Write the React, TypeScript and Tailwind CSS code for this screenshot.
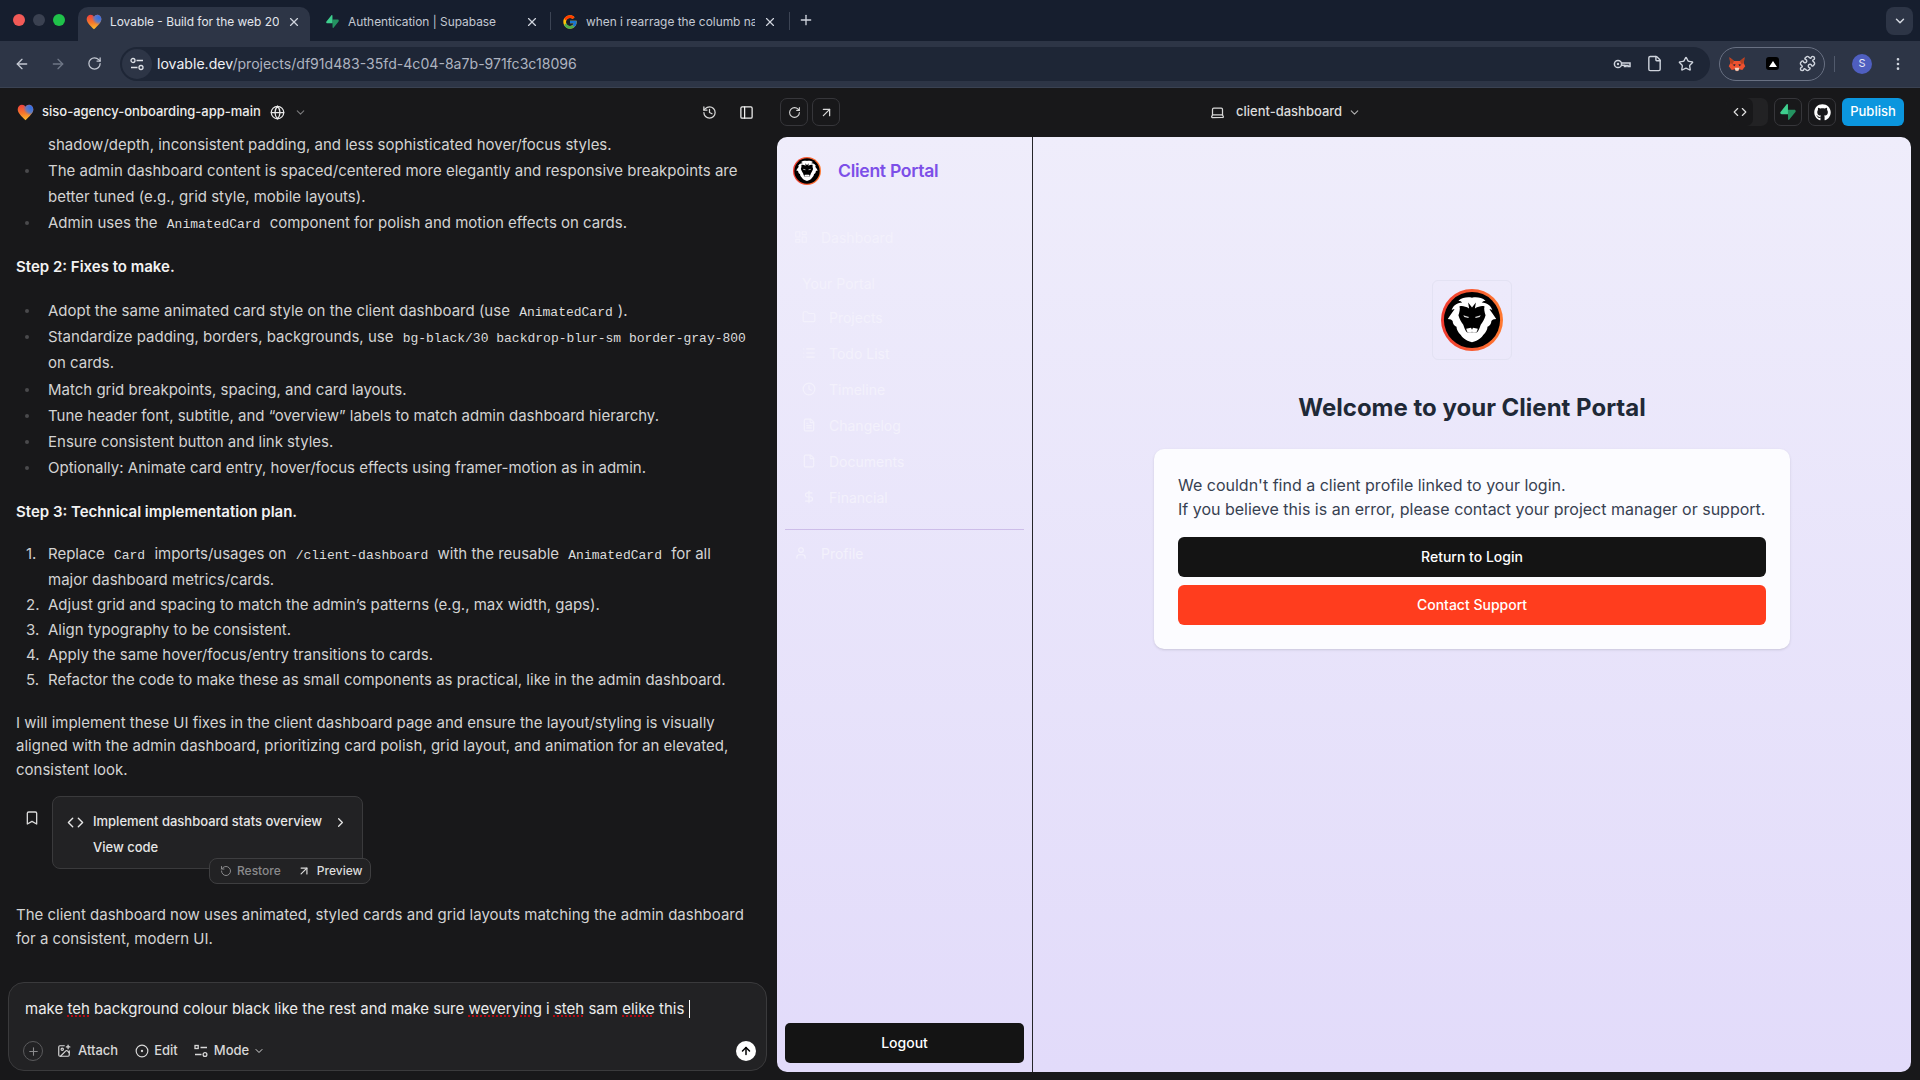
import React from "react";
import {
  ArrowLeft, ArrowRight, RotateCw, X, Plus, ChevronDown, ChevronRight, File, Star, Puzzle, EllipsisVertical,
  History, PanelLeft, Globe, ArrowUpRight, Laptop, Code, Bookmark, RotateCcw, ImagePlus, CircleDot, ArrowUp,
  LayoutDashboard, Folder, List, Clock, FileText, DollarSign, User,
} from "lucide-react";
import { FcGoogle } from "react-icons/fc";
import { FaGithub } from "react-icons/fa";

const Heart = ({ id, size }: { id: string; size: number }) => (
  <svg width={size} height={size} viewBox="0 0 24 24">
    <defs>
      <linearGradient id={id} x1="0.4" y1="0" x2="0.5" y2="1">
        <stop offset="0" stopColor="#f0403c" />
        <stop offset="0.55" stopColor="#f57a2c" />
        <stop offset="1" stopColor="#fbc02d" />
      </linearGradient>
      <radialGradient id={`${id}b`} cx="0.85" cy="0.2" r="0.5">
        <stop offset="0" stopColor="#2f6fe8" />
        <stop offset="0.6" stopColor="#3f7fe0" stopOpacity="0.8" />
        <stop offset="1" stopColor="#3f7fe0" stopOpacity="0" />
      </radialGradient>
    </defs>
    <path d="M12 23 C6 17 1 13 1 7.5 C1 3.5 4 1 7 1 C9.2 1 11 2.3 12 4 C13 2.3 14.8 1 17 1 C20 1 23 3.5 23 7.5 C23 13 18 17 12 23 Z" fill={`url(#${id})`} />
    <path d="M12 23 C6 17 1 13 1 7.5 C1 3.5 4 1 7 1 C9.2 1 11 2.3 12 4 C13 2.3 14.8 1 17 1 C20 1 23 3.5 23 7.5 C23 13 18 17 12 23 Z" fill={`url(#${id}b)`} />
  </svg>
);

const Bolt = ({ size }: { size: number }) => (
  <svg width={size} height={size} viewBox="0 0 109 113">
    <path d="M63.7 110.3c-2.9 3.6-8.7 1.6-8.8-3l-1-67.4h45.5c8.2 0 12.8 9.5 7.7 15.9z" fill="#249361" />
    <path d="M45.3 2.1c2.9-3.6 8.7-1.6 8.8 3l.4 67.4H9.6c-8.2 0-12.8-9.5-7.7-15.9z" fill="#3ecf8e" />
  </svg>
);

const Lion = ({ size, id }: { size: number; id: string }) => (
  <svg width={size} height={size} viewBox="0 0 64 64">
    <defs>
      <linearGradient id={id} x1="0" y1="0" x2="1" y2="0">
        <stop offset="0" stopColor="#f03a30" />
        <stop offset="1" stopColor="#ff7a30" />
      </linearGradient>
    </defs>
    <circle cx="32" cy="32" r="32" fill={`url(#${id})`} />
    <circle cx="32" cy="32" r="29" fill="#000" />
    <path d="M32 9 C27 8 22 9 18 12 C20 12 21 13 22 14 C16 14 12 18 11 22 C12 21 13 21 14 21 C11 25 9 28 7 31 C10 31 11 32 12 33 C12 36 14 38 16 39 C16 42 18 45 20 47 C22 50 25 53 32 55 C39 53 42 50 44 47 C46 45 48 42 48 39 C50 38 52 36 52 33 C53 32 54 31 57 31 C55 28 53 25 50 21 C51 21 52 21 53 22 C52 18 48 14 42 14 C43 13 44 12 46 12 C42 9 37 8 32 9 Z" fill="#fff" />
    <path d="M32 19 L28 14 L29 20 C25 18 22 17 19 18 C20 20 19 24 18 27 C19 31 21 34 23 37 C24 40 25 43 27 45 L37 45 C39 43 40 40 41 37 C43 34 45 31 46 27 C45 24 44 20 45 18 C42 17 39 18 35 20 L36 14 Z" fill="#000" />
    <path d="M23 27 L29 29 L28 30 L24 29 Z M41 27 L35 29 L36 30 L40 29 Z" fill="#d8d8d8" />
    <path d="M26 41 L31 40 L32 42 L33 40 L38 41 L37 44 L34 45 L32 44 L30 45 L27 44 Z" fill="#fff" />
    <path d="M27 45 L37 45 L35 48 L29 48 Z" fill="#fff" />
  </svg>
);

const Fox = () => (
  <svg width="18" height="18" viewBox="0 0 24 24">
    <path d="M2 3 L8 8 H16 L22 3 L21 11 L23 15 L19 20 L15 19 L12 22 L9 19 L5 20 L1 15 L3 11 Z" fill="#ee5130" />
    <path d="M2 3 L8 8 L6 12 L3 11 Z M22 3 L16 8 L18 12 L21 11 Z" fill="#b8401f" />
    <path d="M6 13 L10 12 L9 15 Z M18 13 L14 12 L15 15 Z" fill="#2a2a33" />
    <path d="M9 17 L15 17 L14 21 H10 Z" fill="#f2d8c5" />
  </svg>
);

const ChromeKey = () => (
  <svg width="18" height="18" viewBox="0 0 18 18" fill="none" stroke="#cfd4dd" strokeWidth="1.5">
    <circle cx="5" cy="9" r="3.6" />
    <circle cx="5" cy="9" r="1.2" fill="#cfd4dd" stroke="none" />
    <path d="M8.6 8 H17 V11.5 H15 V10.4 H13 V11.5 H11.5 V10.2 H8.6" />
  </svg>
);

const Tune = ({ color = "#dfe2e8", square }: { color?: string; square?: boolean }) => (
  <svg width="14" height="14" viewBox="0 0 14 14" fill="none" stroke={color} strokeWidth="1.3">
    {square ? <rect x="1" y="1.5" width="3.2" height="3" /> : <circle cx="3" cy="3.5" r="2" />}
    <path d="M6.5 3.5 H13 M1 10.5 H7.5" />
    {square ? <circle cx="11" cy="10.5" r="1.9" /> : <circle cx="11" cy="10.5" r="2" />}
  </svg>
);

const Tab = ({ icon, title, active, width, sep, pl, pr }: { icon: React.ReactNode; title: string; active?: boolean; width: string; sep?: boolean; pl: string; pr: string }) => (
  <div className={`relative flex h-[34px] shrink-0 items-center pb-[5px] ${pl} ${pr} ${width} ${active ? "rounded-t-[10px] bg-[#2d3546]" : ""}`}>
    <div className="flex w-[16px] shrink-0 items-center justify-center">{icon}</div>
    <div className={`ml-[8px] flex-1 overflow-hidden whitespace-nowrap text-[11.9px] ${active ? "text-[#e3e6ec]" : "text-[#c3c8d2]"}`}>{title}</div>
    <X size={14} strokeWidth={2} className="ml-[8px] shrink-0 text-[#cfd4dd]" />
    {sep && <div className="absolute right-0 top-[5px] h-[18px] w-px bg-[#3c4454]" />}
  </div>
);

const ChromeBar = () => (
  <>
    <div className="flex h-[41px] shrink-0 items-end bg-[#161e2e]">
      <div className="mb-[15px] ml-[13px] flex w-[65px] shrink-0 gap-[8px]">
        <div className="h-[12px] w-[12px] rounded-full bg-[#f25a57]" />
        <div className="h-[12px] w-[12px] rounded-full bg-[#3a4151]" />
        <div className="h-[12px] w-[12px] rounded-full bg-[#1fc24a]" />
      </div>
      <Tab active width="w-[232px]" pl="pl-[8px]" pr="pr-[9px]" icon={<Heart id="h1" size={16} />} title="Lovable - Build for the web 20" />
      <Tab width="w-[241px]" sep pl="pl-[14px]" pr="pr-[12px]" icon={<Bolt size={13} />} title="Authentication | Supabase" />
      <Tab width="w-[239px]" sep pl="pl-[11px]" pr="pr-[13px]" icon={<FcGoogle size={16} />} title="when i rearrage the columb na" />
      <div className="mb-[13px] ml-[8px] text-[#cfd4dd]"><Plus size={16} /></div>
      <div className="flex-1" />
      <div className="mb-[6px] mr-[7px] flex h-[28px] w-[27px] items-center justify-center rounded-[8px] bg-[#2d3546]">
        <ChevronDown size={14} strokeWidth={2.5} className="text-[#d5d9e1]" />
      </div>
    </div>
    <div className="flex h-[47px] shrink-0 items-center border-b border-[#3a4252] bg-[#2d3546] pb-[1px]">
      <ArrowLeft size={16} className="ml-[14px] text-[#c3c8d2]" />
      <ArrowRight size={16} className="ml-[20px] text-[#6f7787]" />
      <RotateCw size={15} className="ml-[21px] text-[#c3c8d2]" />
      <div className="ml-[18px] flex h-[34px] w-[1590px] items-center rounded-full bg-[#1e2636]">
        <div className="ml-[2px] flex h-[30px] w-[30px] items-center justify-center rounded-full bg-[#2d3546]">
          <Tune />
        </div>
        <div className="ml-[5px] flex-1 whitespace-nowrap text-[14.1px] text-[#eef0f4]">lovable.dev<span className="text-[#aeb4c0]">/projects/df91d483-35fd-4c04-8a7b-971fc3c18096</span></div>
        <div className="mr-[15px]"><ChromeKey /></div>
        <File size={17} className="mr-[15px] text-[#cfd4dd]" />
        <Star size={16} className="mr-[16px] text-[#cfd4dd]" />
      </div>
      <div className="ml-[9px] flex h-[34px] w-[106px] items-center justify-between rounded-full border border-[#687082] px-[8px]">
        <Fox />
        <div className="flex h-[13px] w-[13px] items-center justify-center rounded-[3px] bg-black">
          <div className="h-0 w-0 border-x-[4px] border-b-[6px] border-x-transparent border-b-white" />
        </div>
        <Puzzle size={17} className="text-[#cfd4dd]" />
      </div>
      <div className="ml-[9px] h-[16px] w-px bg-[#515a6c]" />
      <div className="ml-[17px] flex h-[20px] w-[20px] items-center justify-center rounded-full bg-[#4f5fc0] text-[11px] text-[#e5e8f5]">S</div>
      <EllipsisVertical size={16} className="ml-[18px] text-[#cfd4dd]" />
    </div>
  </>
);

const C = ({ children }: { children: React.ReactNode }) => (
  <code className="mx-[5px] font-['Liberation_Mono',monospace] text-[13px] leading-none text-[#dcdcdc]">{children}</code>
);

const Li = ({ children, mark }: { children: React.ReactNode; mark?: string }) => (
  <div className="relative pl-[32px]">
    {mark ? <span className="absolute left-[10px] top-0 text-[#d0d0d0]">{mark}</span> : <span className="absolute left-[9px] top-[11px] h-[4px] w-[4px] rounded-full bg-[#4a4a4c]" />}
    {children}
  </div>
);

const Typo = ({ children }: { children: React.ReactNode }) => (
  <span className="underline decoration-red-600 decoration-dotted underline-offset-2">{children}</span>
);

const Chat = () => (
  <div className="flex w-[777px] shrink-0 flex-col">
    <div className="flex h-[49px] shrink-0 items-center">
      <div className="ml-[17px]"><Heart id="h2" size={17} /></div>
      <div className="mb-[1px] ml-[8px] text-[13px] font-medium text-[#ececec]">siso-agency-onboarding-app-main</div>
      <Globe size={15} className="ml-[9px] text-[#e8e8e8]" />
      <ChevronDown size={13} className="ml-[9px] text-[#7a7a7c]" />
      <div className="flex-1" />
      <History size={15} className="mr-[22px] text-[#d8d8d8]" />
      <PanelLeft size={15} className="mr-[23px] text-[#f0f0f0]" />
    </div>
    <div className="-mt-[5px] flex-1 overflow-hidden pl-[16px] pr-[24px] text-[15px] text-[#d3d3d3]">
      <div className="leading-[26px]">
        <div className="pl-[32px]">shadow/depth, inconsistent padding, and less sophisticated hover/focus styles.</div>
        <Li>The admin dashboard content is spaced/centered more elegantly and responsive breakpoints are better tuned (e.g., grid style, mobile layouts).</Li>
        <Li>Admin uses the <C>AnimatedCard</C> component for polish and motion effects on cards.</Li>
      </div>
      <div className="mt-[18px] font-semibold leading-[26px] text-[#f2f2f2]">Step 2: Fixes to make.</div>
      <div className="mt-[18px] leading-[26.2px]">
        <Li>Adopt the same animated card style on the client dashboard (use <C>AnimatedCard</C>).</Li>
        <Li>Standardize padding, borders, backgrounds, use <C>bg-black/30 backdrop-blur-sm border-gray-800</C> on cards.</Li>
        <Li>Match grid breakpoints, spacing, and card layouts.</Li>
        <Li>Tune header font, subtitle, and “overview” labels to match admin dashboard hierarchy.</Li>
        <Li>Ensure consistent button and link styles.</Li>
        <Li>Optionally: Animate card entry, hover/focus effects using framer-motion as in admin.</Li>
      </div>
      <div className="mt-[18px] font-semibold leading-[26px] text-[#f2f2f2]">Step 3: Technical implementation plan.</div>
      <div className="mt-[16px] leading-[25.2px]">
        <Li mark="1.">Replace <C>Card</C> imports/usages on <C>/client-dashboard</C> with the reusable <C>AnimatedCard</C> for all major dashboard metrics/cards.</Li>
        <Li mark="2.">Adjust grid and spacing to match the admin’s patterns (e.g., max width, gaps).</Li>
        <Li mark="3.">Align typography to be consistent.</Li>
        <Li mark="4.">Apply the same hover/focus/entry transitions to cards.</Li>
        <Li mark="5.">Refactor the code to make these as small components as practical, like in the admin dashboard.</Li>
      </div>
      <div className="mt-[18px] leading-[23.5px]">I will implement these UI fixes in the client dashboard page and ensure the layout/styling is visually aligned with the admin dashboard, prioritizing card polish, grid layout, and animation for an elevated, consistent look.</div>
      <div className="relative mt-[15px] flex h-[73px]">
        <Bookmark size={16} className="ml-[8px] mt-[14px] text-[#d8d8d8]" />
        <div className="ml-[12px] h-[73px] w-[311px] rounded-[8px] border border-[#3a3a3c] bg-[#222224] text-[#e6e6e6]">
          <div className="mt-[13px] flex h-[24px] items-center text-[13px] font-medium">
            <Code size={17} className="ml-[14px]" />
            <span className="ml-[9px]">Implement dashboard stats overview</span>
            <ChevronRight size={15} className="ml-[11px]" />
          </div>
          <div className="ml-[40px] mt-[4px] text-[13px] font-medium">View code</div>
        </div>
        <div className="absolute left-[193px] top-[62px] flex h-[26px] w-[162px] items-center rounded-[8px] border border-[#3e3e40] bg-[#222224] text-[12px] font-medium">
          <RotateCcw size={12} className="ml-[10px] text-[#8a8a8c]" />
          <span className="ml-[5px] text-[#8a8a8c]">Restore</span>
          <ArrowUpRight size={14} className="ml-[16px] text-[#dcdcdc]" />
          <span className="ml-[6px] text-[#dcdcdc]">Preview</span>
        </div>
      </div>
      <div className="mt-[34px] leading-[23.5px]">The client dashboard now uses animated, styled cards and grid layouts matching the admin dashboard for a consistent, modern UI.</div>
    </div>
    <div className="mb-[9px] ml-[8px] mr-[10px] flex h-[89px] shrink-0 flex-col rounded-[16px] border border-[#3a3a3c] bg-[#222224]">
      <div className="ml-[16px] mt-[14px] flex h-[24px] items-center text-[15px] text-[#ececec]">
        make&nbsp;<Typo>teh</Typo>&nbsp;background colour black like the rest and make sure&nbsp;<Typo>weverying</Typo>&nbsp;i&nbsp;<Typo>steh</Typo>&nbsp;sam&nbsp;<Typo>elike</Typo>&nbsp;this&nbsp;<span className="h-[18px] w-px bg-white" />
      </div>
      <div className="mt-[19px] flex h-[22px] items-center text-[13px] font-medium text-[#d8d8d8]">
        <div className="ml-[14px] flex h-[20px] w-[20px] items-center justify-center rounded-full border border-[#5a5a5c]"><Plus size={13} className="text-[#8a8a8c]" /></div>
        <ImagePlus size={14} className="ml-[14px]" />
        <span className="ml-[7px]">Attach</span>
        <CircleDot size={14} className="ml-[17px]" />
        <span className="ml-[5px]">Edit</span>
        <div className="ml-[16px]"><Tune color="#d8d8d8" square /></div>
        <span className="ml-[6px]">Mode</span>
        <ChevronDown size={12} className="ml-[4px]" />
        <div className="flex-1" />
        <div className="mr-[10px] flex h-[20px] w-[20px] items-center justify-center rounded-full bg-white"><ArrowUp size={12} strokeWidth={3} className="text-black" /></div>
      </div>
    </div>
  </div>
);

const NavItem = ({ icon: I, label, sub }: { icon: React.ElementType; label: string; sub?: boolean }) => (
  <div className={`flex h-[36px] items-center text-[14px] ${sub ? "pl-[25px]" : "pl-[17px]"}`}>
    <I size={14} className="shrink-0" />
    <span className="ml-[13px]">{label}</span>
  </div>
);

const Preview = () => (
  <div className="flex min-w-0 flex-1 flex-col pb-[8px] pr-[9px]">
    <div className="flex h-[49px] shrink-0 items-center pb-[1px]">
      <div className="ml-[3px] flex h-[28px] w-[28px] items-center justify-center rounded-[7px] border border-[#36363a]"><RotateCw size={13} className="text-[#d8d8d8]" /></div>
      <div className="ml-[4px] flex h-[28px] w-[28px] items-center justify-center rounded-[7px] border border-[#36363a]"><ArrowUpRight size={15} className="text-[#d8d8d8]" /></div>
      <Laptop size={15} className="ml-[370px] text-[#d8d8d8]" />
      <span className="ml-[11px] text-[13px] font-medium text-[#dcdcdc]">client-dashboard</span>
      <ChevronDown size={13} className="ml-[6px] text-[#b0b0b0]" />
      <div className="flex-1" />
      <div className="flex h-[28px] w-[42px] rounded-[7px] bg-[#222224]">
        <div className="flex h-[28px] w-[27px] items-center justify-center rounded-[7px] bg-[#18181a]"><Code size={14} className="text-[#e0e0e0]" /></div>
      </div>
      <div className="ml-[6px] flex h-[28px] w-[28px] items-center justify-center rounded-[7px] border border-[#36363a]"><Bolt size={16} /></div>
      <div className="ml-[6px] flex h-[28px] w-[28px] items-center justify-center rounded-[7px] border border-[#36363a]"><FaGithub size={17} className="text-white" /></div>
      <div className="ml-[6px] mr-[7px] flex h-[28px] w-[62px] items-center justify-center rounded-[6px] bg-[#0b96de] text-[13px] font-medium text-white">Publish</div>
    </div>
    <div className="flex min-h-0 flex-1 overflow-hidden rounded-[10px] bg-gradient-to-b from-[#efedfb] to-[#e2dbfa]">
      <div className="flex w-[256px] shrink-0 flex-col border-r border-[#26262a] text-[#f3f1fc]">
        <div className="ml-[16px] mt-[20px] flex h-[28px] items-center">
          <Lion size={28} id="l1" />
          <span className="ml-[17px] text-[17.6px] font-semibold tracking-[-0.3px] text-[#7c4fe8]">Client Portal</span>
        </div>
        <div className="mt-[34px]"><NavItem icon={LayoutDashboard} label="Dashboard" /></div>
        <div className="ml-[25px] mt-[19px] text-[14px] leading-[20px]">Your Portal</div>
        <div className="mt-[5px]">
          <NavItem sub icon={Folder} label="Projects" />
          <NavItem sub icon={List} label="Todo List" />
          <NavItem sub icon={Clock} label="Timeline" />
          <NavItem sub icon={FileText} label="Changelog" />
          <NavItem sub icon={File} label="Documents" />
          <NavItem sub icon={DollarSign} label="Financial" />
        </div>
        <div className="mx-[8px] mt-[14px] h-px bg-[#cdbde9]" />
        <div className="mt-[5px]"><NavItem icon={User} label="Profile" /></div>
        <div className="flex-1" />
        <div className="mx-[8px] mb-[9px] flex h-[40px] items-center justify-center rounded-[5px] bg-[#141414] pb-[1px] text-[14px] font-medium text-white">Logout</div>
      </div>
      <div className="flex min-w-0 flex-1 flex-col items-center">
        <div className="mt-[143px] flex h-[80px] w-[80px] items-center justify-center rounded-[6px] border border-[#e3e2f3]">
          <Lion size={62} id="l2" />
        </div>
        <div className="mt-[30px] text-[24px] font-bold leading-[36px] text-[#1f2937]">Welcome to your Client Portal</div>
        <div className="mt-[23px] w-[636px] rounded-[10px] bg-[#fcfcff] p-[24px] shadow-sm">
          <div className="text-[16px] leading-[24px] text-[#374151]">We couldn't find a client profile linked to your login.<br />If you believe this is an error, please contact your project manager or support.</div>
          <div className="mt-[16px] flex h-[40px] items-center justify-center rounded-[6px] bg-[#141414] pb-[1px] text-[14px] font-medium text-white">Return to Login</div>
          <div className="mt-[8px] flex h-[40px] items-center justify-center rounded-[6px] bg-[#ff3d1e] pb-[1px] text-[14px] font-medium text-white">Contact Support</div>
        </div>
      </div>
    </div>
  </div>
);

export default function App() {
  return (
    <div className="flex h-screen w-screen flex-col overflow-hidden bg-[#18181a] font-['Inter',sans-serif]">
      <ChromeBar />
      <div className="flex min-h-0 flex-1">
        <Chat />
        <Preview />
      </div>
    </div>
  );
}
